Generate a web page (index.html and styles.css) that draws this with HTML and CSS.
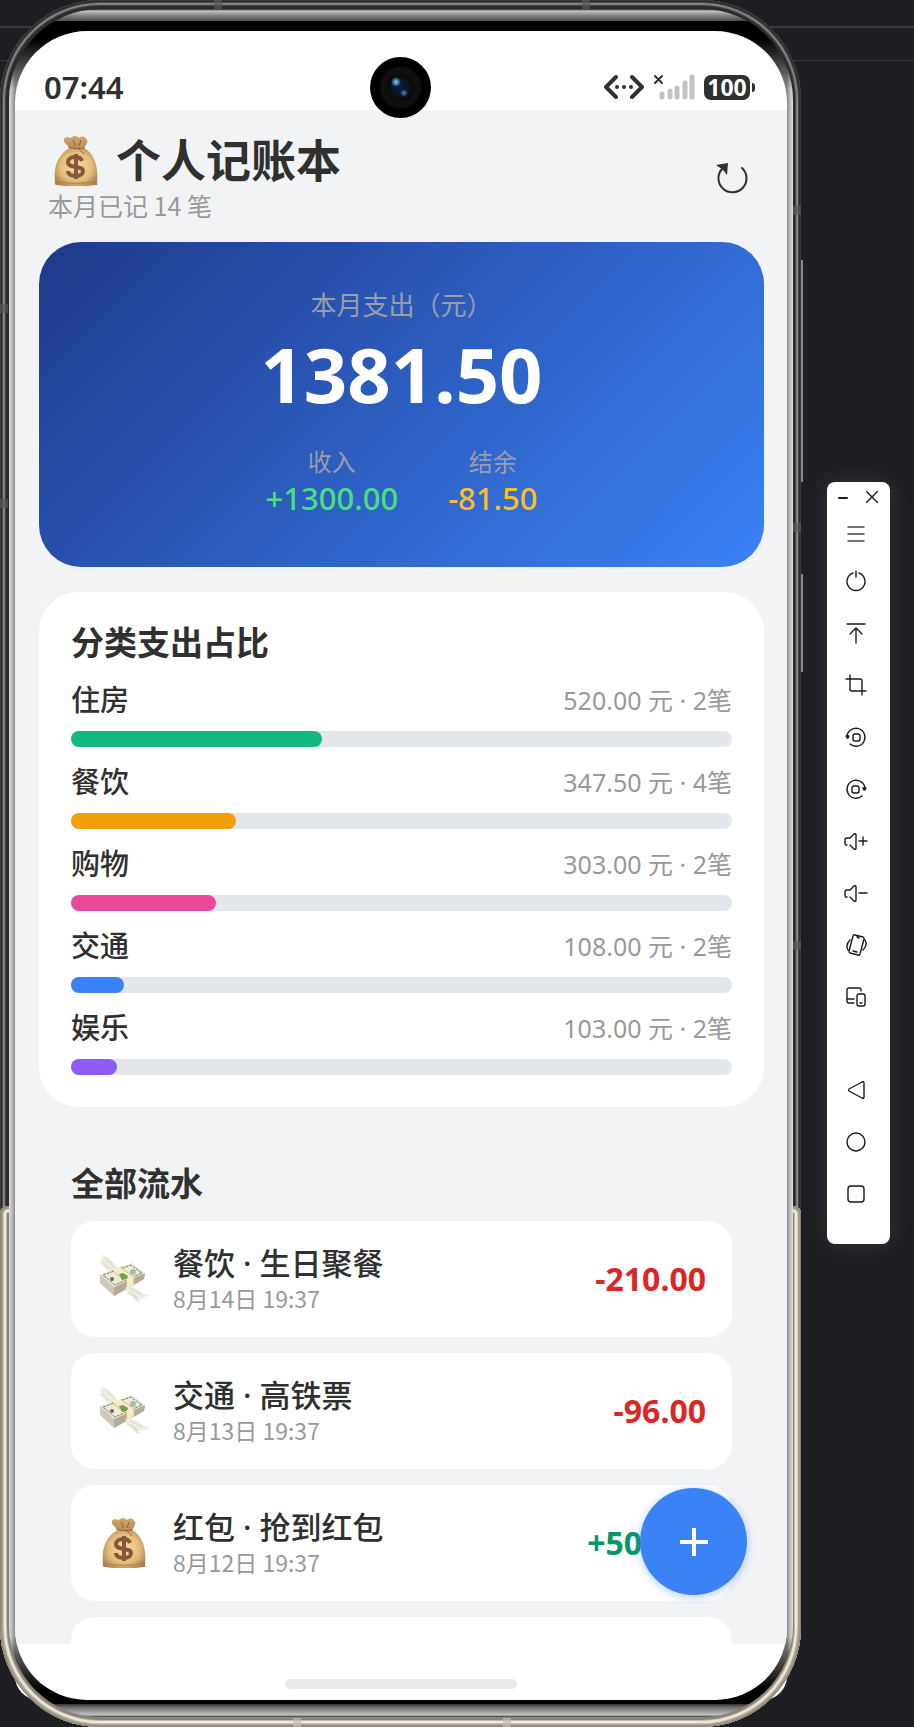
FILE: index.html
```html
<!DOCTYPE html>
<html lang="zh-CN">
<head>
  <meta charset="UTF-8">
  <meta name="viewport" content="width=device-width, initial-scale=1.0">
  <title>个人记账本</title>
  <link rel="stylesheet" href="styles.css">
</head>
<body>

  <!-- Shared icons -->
  <svg class="sprite" aria-hidden="true">
    <defs>
      <radialGradient id="bagFill" cx="0.5" cy="0.5" r="0.6">
        <stop offset="0" stop-color="#fbdc9f"/>
        <stop offset="0.6" stop-color="#e5bd7c"/>
        <stop offset="1" stop-color="#a97f4c"/>
      </radialGradient>
      <linearGradient id="bagTop" x1="0" y1="0" x2="0" y2="1">
        <stop offset="0" stop-color="#d0a66b"/>
        <stop offset="1" stop-color="#b98e56"/>
      </linearGradient>
    </defs>
    <symbol id="money-bag" viewBox="0 0 44 50">
      <path d="M1 47C0 36 1 25 9 17c4-4 8-6 14-6 7 0 11 3 14 7 6 8 7 18 6 29 1 2 0 2-2 2-12 2-26 2-38 0-2 0-3-1-2-2z" fill="url(#bagFill)"/>
      <path d="M15 11C12 8 9 6 10 3c2-3 5-1 7-1 3-3 6-2 8 0 3-2 6-2 7 1 3 1 1 5-2 9-4 1-11 1-15-1z" fill="url(#bagTop)"/>
      <path d="M14 11c5 2 12 2 17 1M19 4c1 2 2 4 2 6M27 4l-2 6M25 13l5 5" fill="none" stroke="#8c643b" stroke-width="1"/>
      <path d="M1 45c12 3 29 3 42 0" fill="none" stroke="#a87d49" stroke-width="1"/>
      <path d="M28 25c-1-3-4-4-7-4-4 0-7 2-7 5 0 7 15 3 15 9 0 3-3 5-7 5s-8-1-8-5M22 18v25" fill="none" stroke="#86593c" stroke-width="4"/>
    </symbol>
    <symbol id="winged-money" viewBox="0 0 50 50">
      <path d="M5 0c1 4 5 3 8 7 4 2 4 5 6 8L8 17c-2-3-4-4-5-6-3-1-3-3-1-3 0-2-2-4 1-4 0-2 0-3 2-4z" fill="#eeeee7"/>
      <path d="M6 3l10 11M3 8l10 8M8 8l5 1M6 10l3 4" stroke="#d9d9cf" fill="none" stroke-width="1"/>
      <path d="M1 20v9l14 13 30-17 1-6z" fill="#cfc9bb"/>
      <path d="M15 33l31-14-1 6-30 17z" fill="#b3ab9c"/>
      <path d="M1 20l32-11 13 10-31 14z" fill="#eceadb"/>
      <path d="M4 21l28-10 11 8-27 12z" fill="none" stroke="#77776a" stroke-width="1" stroke-dasharray="3 1"/>
      <path d="M13 16l8-3 14 10v8l-7 3v-7z" fill="#f4ecd1"/>
      <path d="M13 16l14 12v7M21 13l14 10v8" fill="none" stroke="#e4bd54" stroke-width="1"/>
      <path d="M20 20l4-1 5 3-1 3-5 1z" fill="#6da34f"/>
      <circle cx="13" cy="25" r="2" fill="#6b6b63"/>
      <circle cx="34" cy="18" r="3" fill="#9cc1ab"/>
      <path d="M27 33c5-1 11 1 14 4 3 2 5 4 9 4-2 2-4 2-6 2 1 1 1 2 0 2-2 1-3 0-4-1 0 2 2 3 1 4-3 0-6-2-8-5-4-1-7-6-6-10z" fill="#eeeee7"/>
      <path d="M31 35c4 1 8 4 12 6M30 38l9 6M34 41l5 6" stroke="#d3d3c8" fill="none" stroke-width="1"/>
    </symbol>
  </svg>

  <main class="phone">
    <span class="side-key volume"></span>
    <span class="side-key power"></span>
    <span class="band band-t1"></span>
    <span class="band band-t2"></span>
    <span class="band band-l1"></span>
    <span class="band band-l2"></span>
    <span class="band band-r1"></span>
    <span class="band band-r2"></span>
    <span class="band band-r3"></span>
    <span class="band band-b1"></span>
    <span class="band band-b2"></span>

    <div class="rim">
      <div class="screen">

        <!-- Status bar -->
        <div class="status-bar">
          <span class="clock">07:44</span>
          <div class="status-icons">
            <svg width="40" height="26" viewBox="0 0 40 26" fill="none" stroke="#303030" stroke-width="4" stroke-linecap="round" stroke-linejoin="round">
              <path d="M12 3L2 13l10 10M28 3l10 10-10 10"/>
              <path d="M13 13h0M20 13h0M27 13h0"/>
            </svg>
            <svg width="42" height="26" viewBox="0 0 42 26" fill="none" stroke-linecap="round">
              <path d="M2 2l7 7M9 2L2 9" stroke="#303030" stroke-width="2"/>
              <path d="M9 20v3M17 17v6M24 14v9M32 9v14M39 3v20" stroke="#c2c2c2" stroke-width="5"/>
            </svg>
            <span class="battery">100</span>
          </div>
        </div>
        <div class="camera"></div>

        <div class="app">
          <!-- Header -->
          <header class="header">
            <div>
              <h1><svg class="bag" width="44" height="50"><use href="#money-bag"/></svg>个人记账本</h1>
              <p>本月已记 14 笔</p>
            </div>
            <button class="refresh" aria-label="刷新">
              <svg width="34" height="34" viewBox="0 0 34 34">
                <path d="M27 7a14 14 0 1 1-20 1" fill="none" stroke="#303030" stroke-width="2" stroke-linecap="round"/>
                <path d="M1 4l12-2-1 12-4-5z" fill="#303030"/>
              </svg>
            </button>
          </header>

          <!-- Monthly summary -->
          <section class="summary">
            <p class="summary-label">本月支出（元）</p>
            <p class="summary-total">1381.50</p>
            <div class="summary-row">
              <div>
                <p class="small-label">收入</p>
                <p class="income">+1300.00</p>
              </div>
              <div>
                <p class="small-label">结余</p>
                <p class="balance">-81.50</p>
              </div>
            </div>
          </section>

          <!-- Spending by category -->
          <section class="categories">
            <h2>分类支出占比</h2>
            <ul>
              <li>
                <div class="cat-head"><span>住房</span><small>520.00 元 · 2笔</small></div>
                <div class="track"><div class="bar green" style="width: 38%"></div></div>
              </li>
              <li>
                <div class="cat-head"><span>餐饮</span><small>347.50 元 · 4笔</small></div>
                <div class="track"><div class="bar orange" style="width: 25%"></div></div>
              </li>
              <li>
                <div class="cat-head"><span>购物</span><small>303.00 元 · 2笔</small></div>
                <div class="track"><div class="bar pink" style="width: 22%"></div></div>
              </li>
              <li>
                <div class="cat-head"><span>交通</span><small>108.00 元 · 2笔</small></div>
                <div class="track"><div class="bar blue" style="width: 8%"></div></div>
              </li>
              <li>
                <div class="cat-head"><span>娱乐</span><small>103.00 元 · 2笔</small></div>
                <div class="track"><div class="bar purple" style="width: 7%"></div></div>
              </li>
            </ul>
          </section>

          <!-- All records -->
          <section class="records">
            <h2>全部流水</h2>
            <article class="record">
              <svg width="50" height="50"><use href="#winged-money"/></svg>
              <div class="record-text">
                <h3>餐饮 · 生日聚餐</h3>
                <p>8月14日 19:37</p>
              </div>
              <strong class="expense">-210.00</strong>
            </article>
            <article class="record">
              <svg width="50" height="50"><use href="#winged-money"/></svg>
              <div class="record-text">
                <h3>交通 · 高铁票</h3>
                <p>8月13日 19:37</p>
              </div>
              <strong class="expense">-96.00</strong>
            </article>
            <article class="record">
              <svg width="50" height="50"><use href="#money-bag"/></svg>
              <div class="record-text">
                <h3>红包 · 抢到红包</h3>
                <p>8月12日 19:37</p>
              </div>
              <strong class="gain">+500.00</strong>
            </article>
            <article class="record"></article>
          </section>

          <button class="fab" aria-label="添加">
            <svg width="28" height="28" viewBox="0 0 28 28"><path d="M14 0v28M0 14h28" stroke="#fff" stroke-width="4"/></svg>
          </button>
        </div>

        <div class="home-area"><span class="home-indicator"></span></div>
      </div>
    </div>
  </main>

  <!-- Emulator toolbar -->
  <aside class="toolbar">
    <div class="window-buttons">
      <button aria-label="最小化"><svg width="12" height="12" viewBox="0 0 12 12"><path d="M2 7h8" stroke-width="2"/></svg></button>
      <button aria-label="关闭"><svg width="12" height="12" viewBox="0 0 12 12"><path d="M0 0l12 12M12 0L0 12"/></svg></button>
    </div>
    <button class="tool menu" aria-label="菜单"><svg viewBox="0 0 24 24"><path d="M4 5h16M4 12h16M4 19h16" stroke="#444"/></svg></button>
    <button class="tool" aria-label="电源"><svg viewBox="0 0 24 24"><path d="M9 4a9 9 0 1 0 6 0M12 2v6"/></svg></button>
    <button class="tool" aria-label="上滑"><svg viewBox="0 0 24 24"><path d="M3 3h18M12 22V7M6 13l6-6 6 6"/></svg></button>
    <button class="tool" aria-label="截图"><svg viewBox="0 0 24 24"><path d="M2 6h14q2 0 2 2v14M6 2v14q0 2 2 2h14"/></svg></button>
    <button class="tool" aria-label="向左旋转"><svg viewBox="0 0 24 24"><path d="M3 13A9 9 0 1 1 6 19"/><path d="M2 11l2 2 1-2z" fill="#222"/><rect x="9" y="9" width="7" height="7" rx="2"/></svg></button>
    <button class="tool" aria-label="向右旋转"><svg viewBox="0 0 24 24"><path d="M21 13A9 9 0 1 0 18 19"/><path d="M22 11l-2 2-1-2z" fill="#222"/><rect x="8" y="9" width="7" height="7" rx="2"/></svg></button>
    <button class="tool" aria-label="音量加"><svg viewBox="0 0 24 24"><path d="M3 16H2q-1 0-1-2v-3q0-2 2-2h3l4-4q2-1 2 1v13q0 2-2 1l-4-4M15 12h8M19 8v8"/></svg></button>
    <button class="tool" aria-label="音量减"><svg viewBox="0 0 24 24"><path d="M3 16H2q-1 0-1-2v-3q0-2 2-2h3l4-4q2-1 2 1v13q0 2-2 1l-4-4M15 12h8"/></svg></button>
    <button class="tool" aria-label="摇一摇"><svg viewBox="0 0 24 24"><path d="M11 2l8 2q1 0 1 2l-4 15q-1 2-2 1l-8-2q-1 0-1-2L9 3q1-2 2-1zM9 18l4 1M13 4l2 1M6 7q-5 5-2 10M19 17q5-5 2-10"/></svg></button>
    <button class="tool" aria-label="多设备"><svg viewBox="0 0 24 24"><path d="M17 6V5q0-2-2-2H5Q3 3 3 5v11q0 2 2 2h5M3 14h7M16 18h2"/><rect x="13" y="9" width="8" height="12" rx="2"/></svg></button>
    <button class="tool back" aria-label="返回"><svg viewBox="0 0 24 24"><path d="M18 4q2-1 2 1v14q0 2-2 1L5 13q-1-1 0-2z"/></svg></button>
    <button class="tool" aria-label="主页"><svg viewBox="0 0 24 24"><circle cx="12" cy="12" r="9"/></svg></button>
    <button class="tool" aria-label="多任务"><svg viewBox="0 0 24 24"><rect x="4" y="4" width="16" height="16" rx="3"/></svg></button>
  </aside>

</body>
</html>
```
FILE: styles.css
```css
* { box-sizing: border-box; margin: 0; padding: 0; }

body {
  min-height: 100vh;
  display: flex;
  align-items: center;
  gap: 26px;
  padding-right: 24px;
  font-family: "Noto Sans", "Noto Sans CJK SC", sans-serif;
  color: #303030;
  overflow: hidden;
  background:
    linear-gradient(#38393d, #38393d) 0 26px / 100% 2px no-repeat,
    linear-gradient(#38393d, #38393d) 0 60px / 100% 1px no-repeat,
    #1e1f23;
}
button { border: none; background: none; cursor: pointer; font: inherit; }
ul { list-style: none; }
.sprite { position: absolute; width: 0; height: 0; }

/* Phone body */
.phone {
  position: relative;
  z-index: 0;
  flex: 1;
  height: 100vh;
  padding: 9px 8px 10px 9px;
  border-radius: 100px;
  background: #2b2b2b;
  box-shadow:
    inset 0 0 0 1px #3a3a3a,
    inset 0 0 0 2px #2a2a2a,
    inset 0 0 0 3px #4b4b4b,
    inset 0 0 0 4px #8a8a8a,
    inset 0 0 0 5px #777,
    inset 0 0 0 6px #444;
}
.phone::before {
  content: "";
  position: absolute;
  z-index: -2;
  inset: 50% 14px 27px 15px;
  border-radius: 24px;
  background: #fff;
}
/* gold lower half of the frame */
.phone::after {
  content: "";
  position: absolute;
  z-index: -1;
  inset: 1206px 0 0 0;
  border-radius: 8px 8px 100px 100px;
  background: #8b8374;
  box-shadow:
    inset 0 0 0 1px #8a8172,
    inset 0 0 0 3px #a59c8c,
    inset 0 0 0 4px #cfc7ba,
    inset 0 0 0 6px #ece7df,
    inset 0 0 0 7px #c2b9aa;
}
.rim {
  height: 100%;
  padding: 22px 6px 17px;
  border-radius: 91px;
  background:
    linear-gradient(#222 0, #c4c4c4 2px, #8a8a8a 6px, #4a4a4a 12px, #000 12px, #000 30px, transparent 80px),
    linear-gradient(0deg, #333 0, #c4c4c4 2px, #6a6a6a 10px, #333 13px, #000 13px, #000 28px, transparent 80px),
    linear-gradient(90deg, #ddd 0, #bbb 3px, #888 6px, transparent 6px),
    linear-gradient(-90deg, #ddd 0, #bbb 3px, #888 6px, #888 50%);
}
.screen {
  position: relative;
  height: 100%;
  display: flex;
  flex-direction: column;
  overflow: hidden;
  border-radius: 72px;
  background: #fff;
}
.side-key { position: absolute; right: -2px; width: 2px; background: #8a8a8a; }
.volume { top: 260px; height: 222px; }
.power { top: 574px; height: 98px; }
.band { position: absolute; width: 8px; height: 9px; background: #5a5a5a; opacity: 0.7; }
.band-t1 { top: 0; left: 214px; }
.band-t2 { top: 0; right: 211px; }
.band-l1 { left: 0; top: 304px; }
.band-l2 { left: 0; top: 499px; }
.band-r1 { right: 0; top: 206px; }
.band-r2 { right: 0; top: 523px; }
.band-r3 { right: 0; top: 941px; }
.band-b1 { bottom: 0; left: 293px; background: #c6beb0; }
.band-b2 { bottom: 0; right: 290px; background: #c6beb0; }

/* Status bar */
.status-bar {
  height: 79px;
  flex: none;
  display: flex;
  align-items: center;
  justify-content: space-between;
  padding: 33px 32px 0 29px;
}
.clock { font-size: 31px; font-weight: 600; line-height: 40px; }
.status-icons { display: flex; align-items: center; gap: 9px; }
.battery {
  position: relative;
  width: 46px;
  height: 25px;
  margin-right: 5px;
  border-radius: 7px;
  background: #303030;
  color: #fff;
  font-size: 23px;
  font-weight: 700;
  line-height: 24px;
  text-align: center;
}
.battery::after {
  content: "";
  position: absolute;
  top: 8px;
  right: -5px;
  width: 3px;
  height: 9px;
  border-radius: 0 3px 3px 0;
  background: #303030;
}
.camera {
  position: absolute;
  z-index: 2;
  top: 26px;
  left: calc(50% - 31px);
  width: 61px;
  height: 61px;
  border-radius: 50%;
  background:
    radial-gradient(circle at 26px 25px, #8fd0f0 0, #2d6b9c 3px, transparent 5px),
    radial-gradient(circle at 34px 36px, #4a86c0 0, transparent 4px),
    radial-gradient(circle, #0c1c3a 0, #0a1224 9px, #0b0b0b 11px, #111 19px, #000 22px);
}

/* App */
.app {
  position: relative;
  flex: 1;
  min-height: 0;
  overflow: hidden;
  padding: 23px 23px 0 24px;
  background: #f2f3f5;
}
.header {
  display: flex;
  align-items: center;
  justify-content: space-between;
  padding: 0 12px 0 9px;
  margin-bottom: 20px;
}
.header h1 {
  display: flex;
  align-items: center;
  gap: 18px;
  padding-left: 6px;
  font-size: 45px;
  line-height: 56px;
}
.header p, .record p { font-family: "Noto Sans CJK SC", sans-serif; }
.header p { font-size: 25px; line-height: 33px; color: #999; }
.refresh { width: 40px; height: 40px; }
.refresh svg { display: block; margin: 3px; }

.summary {
  padding: 44px 32px 50px;
  border-radius: 42px;
  background: linear-gradient(135deg, #1e3a8a, #3b82f6);
  text-align: center;
  color: #fff;
}
.summary-label { font-size: 26px; line-height: 38px; color: #999ea9; }
.summary-total { margin-top: 6px; font-size: 76px; font-weight: 700; line-height: 88px; }
.summary-row { display: flex; justify-content: center; gap: 50px; margin-top: 27px; }
.small-label { font-size: 24px; line-height: 34px; color: #999ea9; }
.income, .balance { font-size: 31px; font-weight: 500; line-height: 38px; }
.income { color: #4ade80; }
.balance { color: #fbbf24; }

.categories {
  margin-top: 25px;
  padding: 32px;
  border-radius: 40px;
  background: #fff;
}
h2 { font-size: 33px; line-height: 38px; }
.categories ul { display: grid; gap: 16px; margin-top: 19px; }
.cat-head { display: flex; align-items: center; justify-content: space-between; font-size: 29px; font-weight: 500; line-height: 38px; }
.cat-head small { font-size: 25px; font-weight: 400; color: #999; }
.track { height: 16px; margin-top: 12px; border-radius: 8px; background: #e4e7ec; }
.bar { height: 16px; border-radius: 8px; }
.green { background: #14b981; }
.orange { background: #f59e0b; }
.pink { background: #ec4899; }
.blue { background: #3b82f6; }
.purple { background: #8b5cf6; }

.records { padding: 58px 32px 0; }
.records h2 { margin-bottom: 18px; }
.record {
  display: flex;
  align-items: center;
  min-height: 116px;
  margin-bottom: 16px;
  padding: 0 26px 0 28px;
  border-radius: 24px;
  background: #fff;
}
.record-text { flex: 1; margin-left: 24px; }
.record h3 { font-size: 31px; font-weight: 500; line-height: 38px; }
.record p { font-size: 23px; line-height: 32px; color: #999; }
.record strong { font-size: 32px; line-height: 40px; }
.expense { color: #dc2626; }
.gain { color: #059669; }

.fab {
  position: absolute;
  right: 40px;
  bottom: 49px;
  width: 107px;
  height: 107px;
  display: flex;
  align-items: center;
  justify-content: center;
  border-radius: 50%;
  background: #3b82f6;
  box-shadow: 0 2px 10px rgba(59, 130, 246, 0.4);
}

.home-area { flex: none; height: 56px; display: flex; justify-content: center; align-items: flex-end; padding-bottom: 11px; }
.home-indicator { width: 30%; height: 10px; border-radius: 5px; background: #eaeaea; }

/* Emulator toolbar */
.toolbar {
  width: 63px;
  flex: none;
  display: flex;
  flex-direction: column;
  margin-bottom: 2px;
  padding-bottom: 24px;
  border-radius: 8px;
  background: #fff;
  box-shadow: 0 0 24px rgba(255, 255, 255, 0.1);
}
.toolbar svg { display: block; fill: none; stroke: #1a1a1a; stroke-width: 1.4; stroke-linecap: round; stroke-linejoin: round; }
.window-buttons { display: flex; justify-content: space-between; height: 31px; padding: 0 12px 0 10px; }
.tool { height: 52px; padding-right: 5px; display: flex; align-items: center; justify-content: center; }
.toolbar .tool svg { width: 24px; height: 24px; }
.menu { height: 42px; }
.back { margin-top: 41px; }
```
